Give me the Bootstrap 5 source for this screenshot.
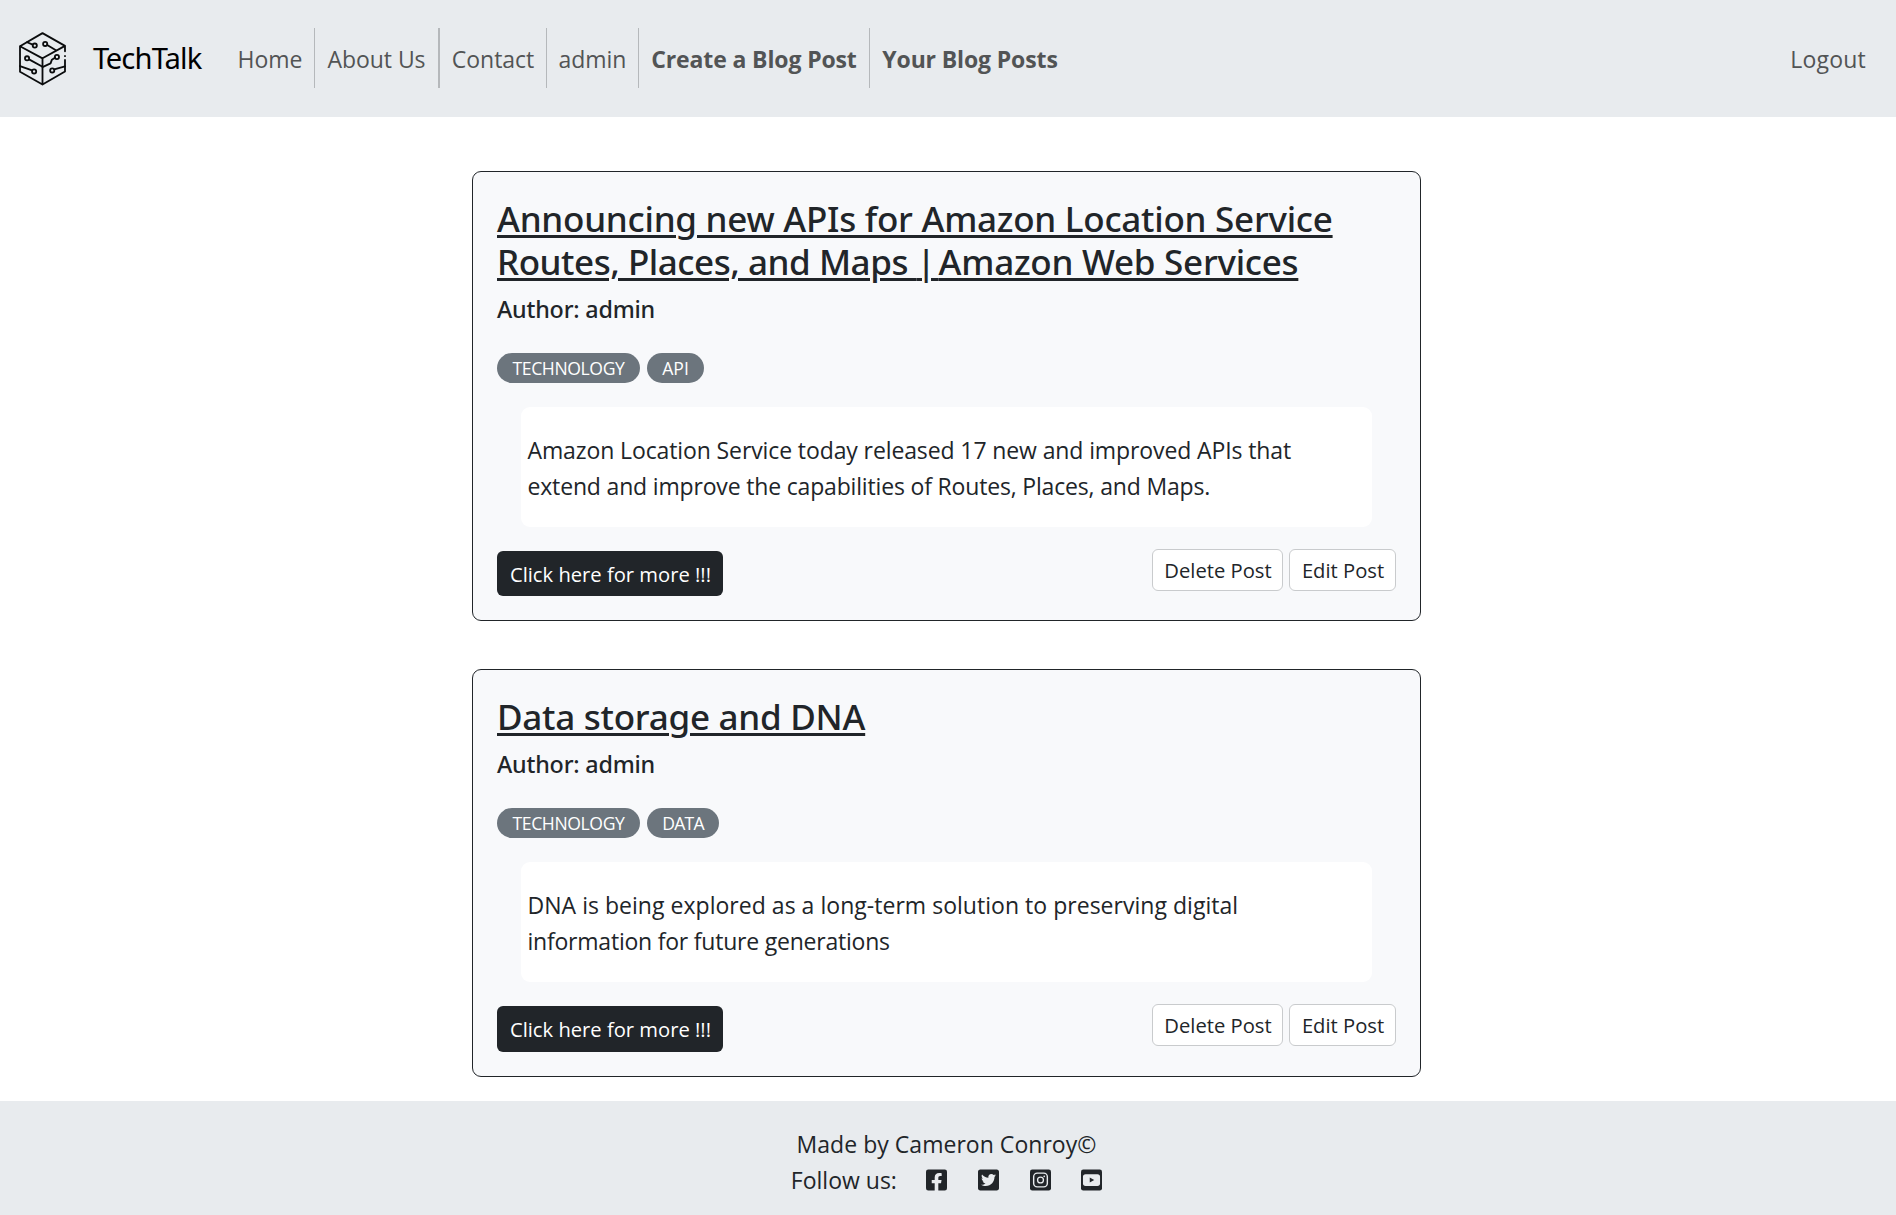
<!DOCTYPE html>
<html lang="en">
<head>
<meta charset="utf-8">
<meta name="viewport" content="width=device-width, initial-scale=1">
<title>TechTalk</title>
<link href="https://cdn.jsdelivr.net/npm/bootstrap@5.3.0/dist/css/bootstrap.min.css" rel="stylesheet">
<style>
html{font-size:24px}
body{font-family:"Open Sans","Noto Sans",sans-serif;font-size:23px;line-height:36px;color:#212529;min-height:100vh;overflow-x:hidden}
.site-bar{background:#e8ebee;height:117px;padding:0 18px 1px}
.brand-mark{width:47px;height:54px;margin:1px 0 0 1px}
.site-name{font-family:"Noto Sans",sans-serif;font-size:29.2px;line-height:45px;color:#000;letter-spacing:-.8px;margin:0 0 0 27px;padding:1px 0 0;width:133px}
.site-name .cap-t{letter-spacing:-3.6px}
.main-links .nav-link{padding:12.500px 0 11.500px;text-align:center;white-space:nowrap;color:#525455;letter-spacing:-.05px;border-right:1px solid #b5b8bb}
.main-links .nav-link.last-link{border-right:0}
.w-home{width:89px}.w-about{width:125px}.w-contact{width:107px}.w-admin{width:92px}.w-create{width:231px}.w-yours{width:200px}
.main-links .w-about{border-right-width:2px}
.main-links .fw-bold{letter-spacing:-.13px}
.exit-link{color:#525455;padding:12.500px 12px 11.500px;letter-spacing:.2px}
.posts{padding:54px 3px 0 0;gap:48px}
.post{width:949px;background:#f8f9fb;border:1px solid #212529;border-radius:9px}
.post .card-body{padding:24px}
.post-title{font-family:"Noto Sans",sans-serif;font-weight:500;font-size:35px;line-height:43.2px;letter-spacing:-.26px;padding-top:1px;margin:0 0 11px;text-decoration:underline;text-decoration-thickness:3px;text-underline-offset:3px;white-space:nowrap}
.tight-line{letter-spacing:-.46px}
.bar-gap{letter-spacing:-3.2px}
.author{font-family:"Noto Sans",sans-serif;font-weight:500;font-size:23.3px;line-height:28.8px;letter-spacing:-.2px;margin:0 0 29px;padding-top:1px}
.tag{background:#6c757d;color:#fff;font-size:17.6px;font-weight:400;line-height:30px;height:30px;padding:0;text-align:center;letter-spacing:-.4px;border-radius:15px}
.tag-row{gap:7px}
.tag-tech{width:143px}.tag-api{width:57px;letter-spacing:0}.tag-data{width:72px;letter-spacing:-.8px}
.excerpt{background:#fff;border-radius:9px;margin:24px 24px 24px;padding:25px 6.500px 23px;height:120px;white-space:nowrap;letter-spacing:-.11px}
.ls-wide{letter-spacing:.03px}.ls-slim{letter-spacing:-.22px}.ls-mid{letter-spacing:-.17px}
.actions{height:45px}
.post:last-child .actions{height:45.8px}
.act{font-size:20.2px;line-height:31px;border-radius:6px;padding:0;text-align:center}
.act-more{width:226px;height:100%;background:#212529;color:#fff;border:0;padding:8px 0 0 1px}
.act-more:hover{background:#424649;color:#fff}
.act-plain{height:42px;background:#fff;border:1px solid #c9cbcd;margin-top:-2px;padding:0 0 0 1px;line-height:40px}
.act-del{width:131px}.act-edit{width:107px}
.site-foot{background:#e8ebee;height:114px;padding:25px 3px 0 0}
.social svg{width:21px;height:24px;display:block}
.social{gap:30.6px;margin-left:29.500px;padding-top:6px}
</style>
</head>
<body class="d-flex flex-column">
<nav class="site-bar d-flex align-items-center">
  <svg class="brand-mark flex-shrink-0" viewBox="28 23 140 160" fill="none" stroke="#0b0c0d" stroke-width="5.4" stroke-linejoin="round" stroke-linecap="round">
    <path d="M165 80V64L98 26 31 65V141L98 179 165 140V106M31 65 98 101 165 64M98 101V179M165 94v.5"/>
    <path d="M69 60 52 53M112 61 138 77M58 104 98 126M67 137 31 124M135 99 126 105 122 116 98 127M133 134 165 125"/>
    <circle cx="75" cy="63" r="6.2"/><circle cx="106" cy="58" r="6.2"/><circle cx="52" cy="101" r="6.2"/><circle cx="73" cy="140" r="6.2"/><circle cx="141" cy="97" r="6.2"/><circle cx="127" cy="137" r="6.2"/>
  </svg>
  <a class="site-name text-decoration-none" href="#"><span class="cap-t">T</span>ech<span class="cap-t">T</span>alk</a>
  <div class="main-links d-flex">
    <a class="nav-link w-home" href="#">Home</a>
    <a class="nav-link w-about" href="#">About Us</a>
    <a class="nav-link w-contact" href="#">Contact</a>
    <a class="nav-link w-admin" href="#">admin</a>
    <a class="nav-link w-create fw-bold" href="#">Create a Blog Post</a>
    <a class="nav-link w-yours last-link fw-bold" href="#">Your Blog Posts</a>
  </div>
  <a class="nav-link exit-link ms-auto" href="#">Logout</a>
</nav>

<main class="posts d-flex flex-column align-items-center">
  <article class="card post">
    <div class="card-body">
      <h4 class="post-title">Announcing new APIs for Amazon Location Service<br><span class="tight-line">Routes, Places, and Maps <span class="bar-gap">| </span></span>Amazon Web Services</h4>
      <h6 class="author">Author: admin</h6>
      <div class="d-flex tag-row">
        <span class="badge tag tag-tech">TECHNOLOGY</span>
        <span class="badge tag tag-api">API</span>
      </div>
      <div class="excerpt">Amazon Location Service today released 17 new and improved APIs that<br><span class="ls-mid">extend and improve the capabilities of Routes, Places, and Maps.</span></div>
      <div class="actions d-flex justify-content-between align-items-start">
        <a class="btn act act-more" href="#">Click here for more !!!</a>
        <div class="d-flex gap-1">
          <button class="btn act act-plain act-del">Delete Post</button>
          <button class="btn act act-plain act-edit">Edit Post</button>
        </div>
      </div>
    </div>
  </article>
  <article class="card post">
    <div class="card-body">
      <h4 class="post-title">Data storage and DNA</h4>
      <h6 class="author">Author: admin</h6>
      <div class="d-flex tag-row">
        <span class="badge tag tag-tech">TECHNOLOGY</span>
        <span class="badge tag tag-data">DATA</span>
      </div>
      <div class="excerpt"><span class="ls-wide">DNA is being explored as a long-term solution to preserving digital</span><br><span class="ls-slim">information for future generations</span></div>
      <div class="actions d-flex justify-content-between align-items-start">
        <a class="btn act act-more" href="#">Click here for more !!!</a>
        <div class="d-flex gap-1">
          <button class="btn act act-plain act-del">Delete Post</button>
          <button class="btn act act-plain act-edit">Edit Post</button>
        </div>
      </div>
    </div>
  </article>
</main>

<footer class="site-foot mt-auto d-flex flex-column align-items-center">
  <div class="ls-wide">Made by Cameron Conroy©</div>
  <div class="d-flex">
    <span>Follow us:</span>
    <div class="social d-flex">
      <svg viewBox="0 0 448 512" fill="#212529"><path d="M400 32H48A48 48 0 0 0 0 80v352a48 48 0 0 0 48 48h137.25V327.69h-63V256h63v-54.64c0-62.15 37-96.48 93.67-96.48 27.14 0 55.52 4.84 55.52 4.84v61h-31.27c-30.81 0-40.42 19.12-40.42 38.73V256h68.78l-11 71.69h-57.78V480H400a48 48 0 0 0 48-48V80a48 48 0 0 0-48-48z"/></svg>
      <svg viewBox="0 0 448 512" fill="#212529"><path d="M400 32H48C21.5 32 0 53.5 0 80v352c0 26.5 21.5 48 48 48h352c26.5 0 48-21.5 48-48V80c0-26.500-21.500-48-48-48zm-48.900 158.800c.2 2.800.2 5.700.2 8.500 0 86.700-66 186.600-186.600 186.600-37.200 0-71.700-10.800-100.700-29.400 5.300.6 10.400.8 15.800.8 30.700 0 58.900-10.400 81.400-28-28.800-.6-53-19.500-61.300-45.500 10.100 1.500 19.200 1.500 29.600-1.200-30-6.100-52.500-32.500-52.500-64.400v-.8c8.700 4.900 18.900 7.900 29.600 8.300a65.447 65.447 0 0 1-29.200-54.600c0-12.200 3.200-23.400 8.900-33.100 32.300 39.800 80.800 65.800 135.200 68.600-9.300-44.500 24-80.600 64-80.600 18.900 0 35.900 7.900 47.900 20.700 14.800-2.800 29-8.300 41.600-15.800-4.900 15.200-15.200 28-28.800 36.100 13.200-1.400 26-5.100 37.800-10.200-8.900 13.100-20.100 24.700-32.900 34z"/></svg>
      <svg viewBox="0 0 448 512"><rect y="32" width="448" height="448" rx="48" fill="#212529"/><rect x="78" y="110" width="292" height="292" rx="76" fill="none" stroke="#e8ebee" stroke-width="30"/><circle cx="224" cy="256" r="63" fill="none" stroke="#e8ebee" stroke-width="28"/><circle cx="303" cy="177" r="18" fill="#e8ebee"/></svg>
      <svg viewBox="0 0 448 512"><rect y="32" width="448" height="448" rx="48" fill="#212529"/><rect x="42" y="132" width="364" height="250" rx="56" fill="#e8ebee"/><path d="M186.800 202 282 256 186.800 310z" fill="#212529"/></svg>
    </div>
  </div>
</footer>
<script src="https://cdn.jsdelivr.net/npm/bootstrap@5.3.0/dist/js/bootstrap.bundle.min.js"></script>
</body>
</html>
